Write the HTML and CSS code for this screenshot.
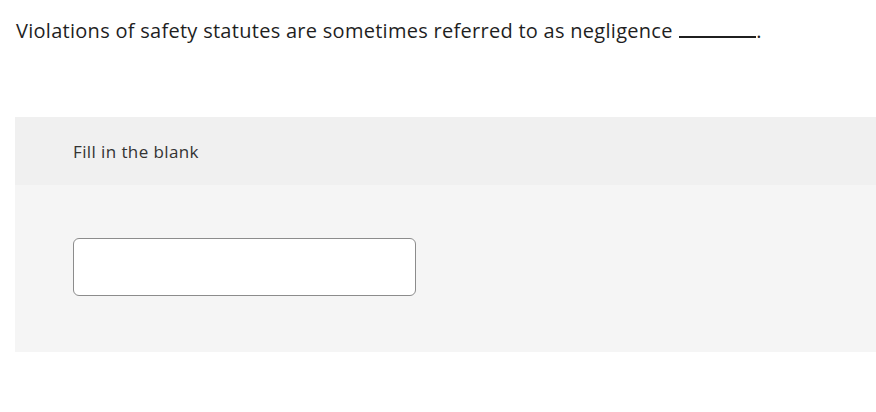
FILE: index.html
```html
<!DOCTYPE html>
<html>
<head>
<meta charset="utf-8">
<link rel="stylesheet" href="styles.css">
</head>
<body>
<div class="page">
  <p class="question">Violations of safety statutes are sometimes referred to as negligence <span class="blank"></span>.</p>
  <section class="panel">
    <div class="panel-head">Fill in the blank</div>
    <div class="panel-body">
      <input class="answer" type="text" aria-label="answer">
    </div>
  </section>
</div>
</body>
</html>
```

FILE: styles.css
```css
html, body {
  margin: 0;
  padding: 0;
  background: #ffffff;
}
.page {
  padding: 17px 0 0 15px;
  font-family: "Open Sans", "Liberation Sans", sans-serif;
  color: #222222;
}
.question {
  margin: 0 0 0 1px;
  font-size: 20px;
  line-height: 28px;
  letter-spacing: 0.28px;
  color: #1f1f1f;
}
.blank {
  display: inline-block;
  width: 77px;
  border-bottom: 2px solid #1f1f1f;
  margin-left: 1px;
  vertical-align: baseline;
}
.panel {
  margin-top: 72px;
  width: 861px;
}
.panel-head {
  height: 68px;
  background: #f0f0f0;
  box-sizing: border-box;
  padding: 24px 0 0 58px;
  font-size: 17px;
  line-height: 22px;
  letter-spacing: 0.4px;
  color: #333333;
}
.panel-body {
  height: 167px;
  background: #f5f5f5;
  box-sizing: border-box;
  padding: 53px 0 0 58px;
}
.answer {
  display: block;
  width: 343px;
  height: 58px;
  box-sizing: border-box;
  margin: 0;
  border: 1px solid #8c8c8c;
  border-radius: 6px;
  background: #ffffff;
  outline: none;
}
```
